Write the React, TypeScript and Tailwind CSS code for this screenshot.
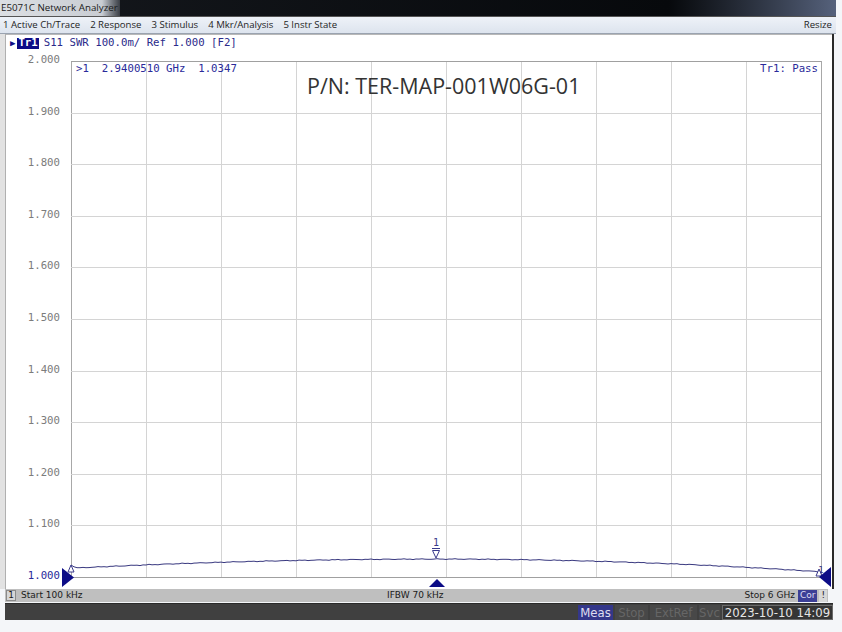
import React from "react";

const mono = { fontFamily: '"DejaVu Sans Mono", "Liberation Mono", monospace' };
const ui = { fontFamily: '"Open Sans", "Noto Sans", sans-serif' };
const tah = { fontFamily: '"DejaVu Sans", "Liberation Sans", sans-serif' };
const narrow = { fontFamily: '"DejaVu Sans Condensed", "Liberation Sans Narrow", "Liberation Sans", sans-serif' };

// plot geometry in page coordinates
const X0 = 71;
const X1 = 821;
const Y0 = 60;
const DIV = 51.6;
const Y1 = Y0 + DIV * 10;

const labels = ["2.000", "1.900", "1.800", "1.700", "1.600", "1.500", "1.400", "1.300", "1.200", "1.100", "1.000"];

function swr(f: number) {
  const peak = 0.49;
  const k = f < peak ? 0.074 : 0.095;
  return 1.0347 - k * (f - peak) * (f - peak);
}

function tracePath() {
  const pts: string[] = [];
  for (let x = X0; x <= X1; x += 3) {
    const f = (x - X0) / (X1 - X0);
    const v = swr(f);
    const noise = Math.sin(x * 0.37) * 0.25 + Math.sin(x * 1.13) * 0.2;
    let y = Y1 - (v - 1) * 516 + noise;
    if (x < 76) y = Y1 - 12 + (x - X0) * 0.6;
    pts.push(`${x},${y.toFixed(1)}`);
  }
  return "M" + pts.join(" L");
}

function Chart() {
  const vlines = Array.from({ length: 11 }, (_, i) => X0 + i * 75);
  const hlines = Array.from({ length: 11 }, (_, i) => Y0 + i * DIV);
  return (
    <svg className="absolute inset-0" width={826} height={555}>
      <g transform="translate(-6,-34)">
        {vlines.map((x, i) => (
          <line key={"v" + i} x1={x + 0.5} y1={Y0} x2={x + 0.5} y2={Y1} stroke={i === 0 || i === 10 ? "#a8a8a8" : "#d4d4d4"} strokeWidth={1} />
        ))}
        {hlines.map((y, i) => (
          <line key={"h" + i} x1={X0} y1={Math.round(y) + 0.5} x2={X1} y2={Math.round(y) + 0.5} stroke={i === 0 || i === 10 ? "#a0a0a0" : "#d4d4d4"} strokeWidth={1} />
        ))}
        <path d={tracePath()} fill="none" stroke="#38387f" strokeWidth={1} />
        {/* marker 1 */}
        <text x={436} y={545} textAnchor="middle" fontSize={10} fill="#3a3a8c" style={mono}>1</text>
        <line x1={432} y1={547.5} x2={440} y2={547.5} stroke="#3a3a8c" />
        <polygon points="432.5,549.5 439.5,549.5 436,557" fill="#fff" stroke="#3a3a8c" strokeWidth={1} />
        {/* left ref */}
        <polygon points="68,571 71,564 74,571" fill="#fff" stroke="#3a3a8c" strokeWidth={1} />
        <polygon points="62,567 74,576.5 62,586" fill="#0c0c86" />
        {/* right ref */}
        <text x={821} y={572} textAnchor="middle" fontSize={9} fill="#3a3a8c" style={mono}>1</text>
        <polygon points="816,575 819,568 822,575" fill="#fff" stroke="#3a3a8c" strokeWidth={1} />
        <polygon points="831,566 819,576 831,586" fill="#0c0c86" />
        {/* stimulus pointer */}
        <polygon points="429,586 437,578 445,586" fill="#0c0c86" />
      </g>
    </svg>
  );
}

export default function App() {
  return (
    <div className="relative w-[842px] h-[632px] overflow-hidden bg-[#f4f6f9]">
      <div className="flex w-[836px] flex-col">
        {/* title bar */}
        <div className="flex h-[17px] items-stretch bg-linear-to-r from-[#15181d] via-[#07090c] via-80% to-[#56627c] border-b border-[#555]">
          <span className="flex w-[120px] items-center bg-linear-to-r from-[#dcdfe3] via-[#c9cdd3] via-85% to-[#3a3e45] pl-[1px] text-[9.75px] leading-none text-[#1a1a1a]" style={ui}>
            E5071C Network Analyzer
          </span>
        </div>
        {/* menu bar */}
        <div className="flex h-[17px] items-center justify-between bg-linear-to-b from-[#eef2f8] to-[#dde4ee] border-b border-[#9aa3b0] pl-[3px] pr-[4px] text-[9.6px] leading-none text-[#1e1e1e]" style={ui}>
          <div className="flex gap-[10px]">
            <span>1 Active Ch/Trace</span>
            <span>2 Response</span>
            <span>3 Stimulus</span>
            <span>4 Mkr/Analysis</span>
            <span>5 Instr State</span>
          </div>
          <span>Resize</span>
        </div>
        {/* body */}
        <div className="flex h-[555px]">
          <div className="w-[6px] bg-[#e2e2e2] border-r border-[#b0b0b0]" />
          <div className="relative w-[826px] bg-white border-t border-[#b8b8b8]">
            <Chart />
            {/* header */}
            <div className="absolute left-[4px] top-[3px] flex items-center text-[10.7px] leading-none text-[#2a2a8a]" style={mono}>
              <span className="mr-[2px] text-[9px] text-[#0c0c86]">▶</span>
              <span className="bg-[#0c0c86] px-[1px] font-bold text-white">Tr1</span>
              <span className="ml-[5px] whitespace-pre">S11 SWR 100.0m/ Ref 1.000 [F2]</span>
            </div>
            {/* y labels */}
            {labels.map((l, i) => (
              <div
                key={l}
                className={`absolute left-[18px] w-[36px] text-right text-[10.7px] leading-none ${i === 10 ? "text-[#2a2a9a]" : "text-[#7c7c7c]"}`}
                style={{ ...mono, top: Math.round(Y0 - 34 + i * DIV) - 6 }}
              >
                {l}
              </div>
            ))}
            <div className="absolute left-[70px] top-[29px] whitespace-pre text-[10.7px] leading-none text-[#2a2a9a]" style={mono}>
              {">1  2.9400510 GHz  1.0347"}
            </div>
            <div className="absolute right-[14px] top-[29px] whitespace-pre text-[10.7px] leading-none text-[#2a2a9a]" style={mono}>
              Tr1: Pass
            </div>
            <div className="absolute left-[301px] top-[40px] text-[21.5px] leading-none text-[#333]" style={ui}>
              P/N: TER-MAP-001W06G-01
            </div>
          </div>
          <div className="w-[4px] border-l-2 border-[#2a2a2a] bg-[#f4f6f9]" />
        </div>
        {/* status bar */}
        <div className="ml-[5px] mr-[8px] flex h-[13px] items-center bg-[#bfbfbf] text-[9px] leading-none text-[#1a1a1a]" style={tah}>
          <span className="ml-[1px] flex h-[11px] w-[10px] items-center justify-center border border-[#8a8a8a] bg-[#d6d6d6]">1</span>
          <span className="ml-[5px] w-[300px]">Start 100 kHz</span>
          <span className="ml-[66px] w-[150px]">IFBW 70 kHz</span>
          <span className="ml-auto">Stop 6 GHz</span>
          <span className="ml-[3px] flex h-[12px] items-center bg-[#3c3f96] px-[2px] text-[#dcdcf2]">Cor</span>
          <span className="ml-[2px] mr-[1px] flex h-[12px] items-center bg-[#d8d8d8] px-[2px]">!</span>
        </div>
        {/* dark bar */}
        <div className="ml-[5px] mr-[3px] mt-[1px] flex h-[17px] items-center justify-end gap-[2px] bg-[#404040] border-t border-[#2a2a2a] text-[13px] leading-none" style={narrow}>
          <span className="flex h-[15px] w-[35px] items-center justify-center bg-[#34378a] text-[#dedef0]">Meas</span>
          <span className="flex h-[15px] w-[33px] items-center justify-center bg-[#484848] text-[#666]">Stop</span>
          <span className="flex h-[15px] w-[47px] items-center justify-center bg-[#484848] text-[#666]">ExtRef</span>
          <span className="flex h-[15px] w-[21px] items-center justify-center overflow-hidden bg-[#484848] text-[#666]">Svc</span>
          <span className="flex h-[15px] w-[111px] items-center justify-center whitespace-nowrap border border-[#6a6a6a] bg-[#353535] text-[#e6e6e6]">2023-10-10 14:09</span>
        </div>
      </div>
    </div>
  );
}
